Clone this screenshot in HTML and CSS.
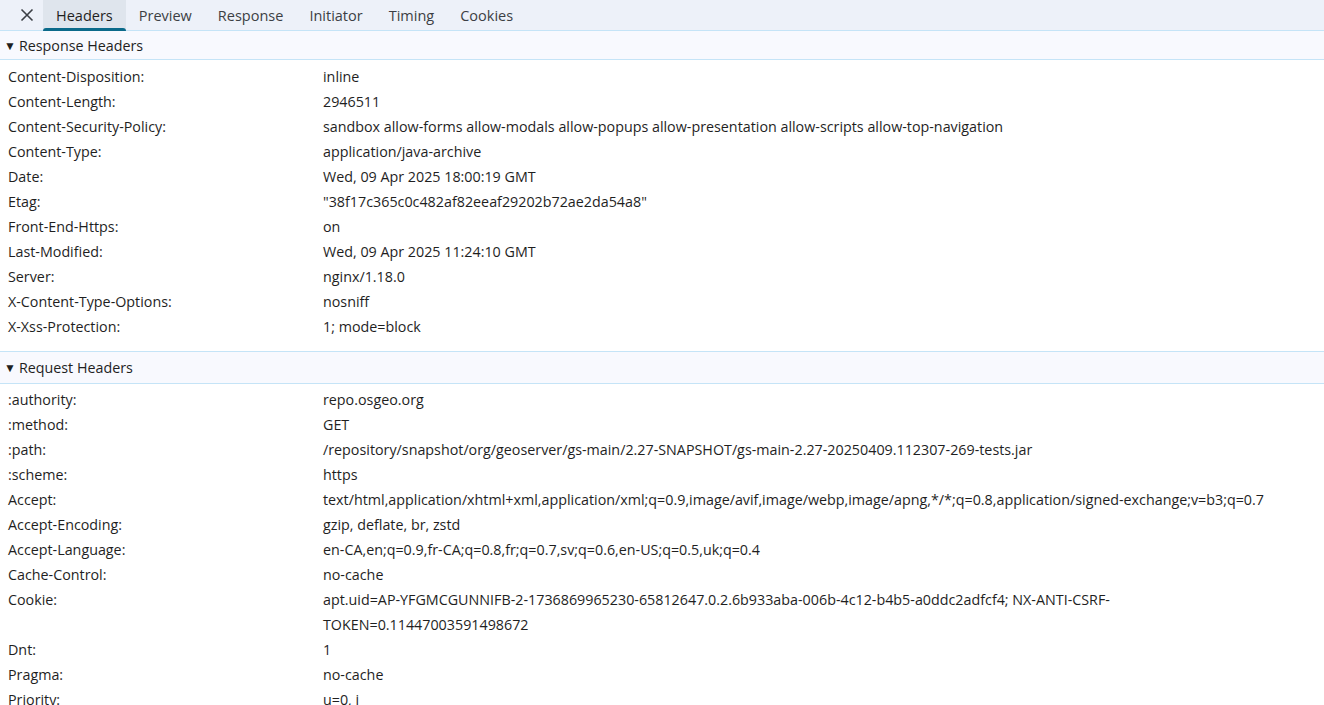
FILE: index.html
```html
<!DOCTYPE html>
<html lang="en">
<head>
  <meta charset="UTF-8">
  <title>Headers</title>
  <link rel="stylesheet" href="styles.css">
</head>
<body>
  <div class="tabs">
    <div class="close">
      <svg width="14" height="14" viewBox="0 0 14 14"><path d="M1.5 1.5 L12.5 12.5 M12.5 1.5 L1.5 12.5" stroke="#3b3f45" stroke-width="1.6" fill="none"/></svg>
    </div>
    <div class="tab active">Headers</div>
    <div class="tab">Preview</div>
    <div class="tab">Response</div>
    <div class="tab">Initiator</div>
    <div class="tab">Timing</div>
    <div class="tab">Cookies</div>
  </div>

  <div class="section-title"><span class="arrow">▼</span>Response Headers</div>
  <div class="rows">
    <div class="row"><div class="name">Content-Disposition:</div><div class="value">inline</div></div>
    <div class="row"><div class="name">Content-Length:</div><div class="value">2946511</div></div>
    <div class="row"><div class="name">Content-Security-Policy:</div><div class="value">sandbox allow-forms allow-modals allow-popups allow-presentation allow-scripts allow-top-navigation</div></div>
    <div class="row"><div class="name">Content-Type:</div><div class="value">application/java-archive</div></div>
    <div class="row"><div class="name">Date:</div><div class="value">Wed, 09 Apr 2025 18:00:19 GMT</div></div>
    <div class="row"><div class="name">Etag:</div><div class="value">"38f17c365c0c482af82eeaf29202b72ae2da54a8"</div></div>
    <div class="row"><div class="name">Front-End-Https:</div><div class="value">on</div></div>
    <div class="row"><div class="name">Last-Modified:</div><div class="value">Wed, 09 Apr 2025 11:24:10 GMT</div></div>
    <div class="row"><div class="name">Server:</div><div class="value">nginx/1.18.0</div></div>
    <div class="row"><div class="name">X-Content-Type-Options:</div><div class="value">nosniff</div></div>
    <div class="row"><div class="name">X-Xss-Protection:</div><div class="value">1; mode=block</div></div>
  </div>

  <div class="section-title second"><span class="arrow">▼</span>Request Headers</div>
  <div class="rows request">
    <div class="row"><div class="name">:authority:</div><div class="value">repo.osgeo.org</div></div>
    <div class="row"><div class="name">:method:</div><div class="value">GET</div></div>
    <div class="row"><div class="name">:path:</div><div class="value">/repository/snapshot/org/geoserver/gs-main/2.27-SNAPSHOT/gs-main-2.27-20250409.112307-269-tests.jar</div></div>
    <div class="row"><div class="name">:scheme:</div><div class="value">https</div></div>
    <div class="row"><div class="name">Accept:</div><div class="value">text/html,application/xhtml+xml,application/xml;q=0.9,image/avif,image/webp,image/apng,*/*;q=0.8,application/signed-exchange;v=b3;q=0.7</div></div>
    <div class="row"><div class="name">Accept-Encoding:</div><div class="value">gzip, deflate, br, zstd</div></div>
    <div class="row"><div class="name">Accept-Language:</div><div class="value">en-CA,en;q=0.9,fr-CA;q=0.8,fr;q=0.7,sv;q=0.6,en-US;q=0.5,uk;q=0.4</div></div>
    <div class="row"><div class="name">Cache-Control:</div><div class="value">no-cache</div></div>
    <div class="row"><div class="name">Cookie:</div><div class="value">apt.uid=AP-YFGMCGUNNIFB-2-1736869965230-65812647.0.2.6b933aba-006b-4c12-b4b5-a0ddc2adfcf4; NX-ANTI-CSRF-<br>TOKEN=0.11447003591498672</div></div>
    <div class="row"><div class="name">Dnt:</div><div class="value">1</div></div>
    <div class="row"><div class="name">Pragma:</div><div class="value">no-cache</div></div>
    <div class="row"><div class="name">Priority:</div><div class="value">u=0, i</div></div>
  </div>
</body>
</html>
```

FILE: styles.css
```css
body {
  margin: 0;
  font-family: 'Open Sans', 'Noto Sans', sans-serif;
  font-size: 14.3px;
  color: #1f1f1f;
  background: #fff;
  overflow: hidden;
}
.tabs {
  display: flex;
  align-items: stretch;
  height: 31px;
  background: #edf1f9;
  border-bottom: 1px solid #c5e4f7;
  box-sizing: border-box;
  padding-left: 10px;
}
.close {
  width: 33px;
  display: flex;
  align-items: center;
  justify-content: center;
}
.tab {
  position: relative;
  padding: 0 13px;
  display: flex;
  align-items: center;
  font-size: 14.5px;
  color: #3c3f44;
}
.tab.active {
  background: #dfe5ed;
  color: #1f1f1f;
}
.tab.active::after {
  content: "";
  position: absolute;
  left: 0;
  right: 0;
  bottom: -1px;
  height: 3px;
  background: #0b6a8a;
  border-radius: 3px 3px 0 0;
}
.section-title {
  height: 28px;
  display: flex;
  align-items: center;
  padding-left: 4px;
  background: #f8f9fe;
  border-bottom: 1px solid #c5e4f7;
  color: #1f1f1f;
}
.section-title.second {
  border-top: 1px solid #c5e4f7;
  height: 33px;
  box-sizing: border-box;
}
.arrow {
  font-size: 12px;
  margin-right: 3px;
}
.rows {
  padding: 4px 0 12px;
}
.rows.request {
  padding-top: 3px;
}
.row {
  display: flex;
  line-height: 25px;
}
.name {
  width: 315px;
  padding-left: 8px;
  flex: none;
}
.value {
  flex: 1;
}
```
